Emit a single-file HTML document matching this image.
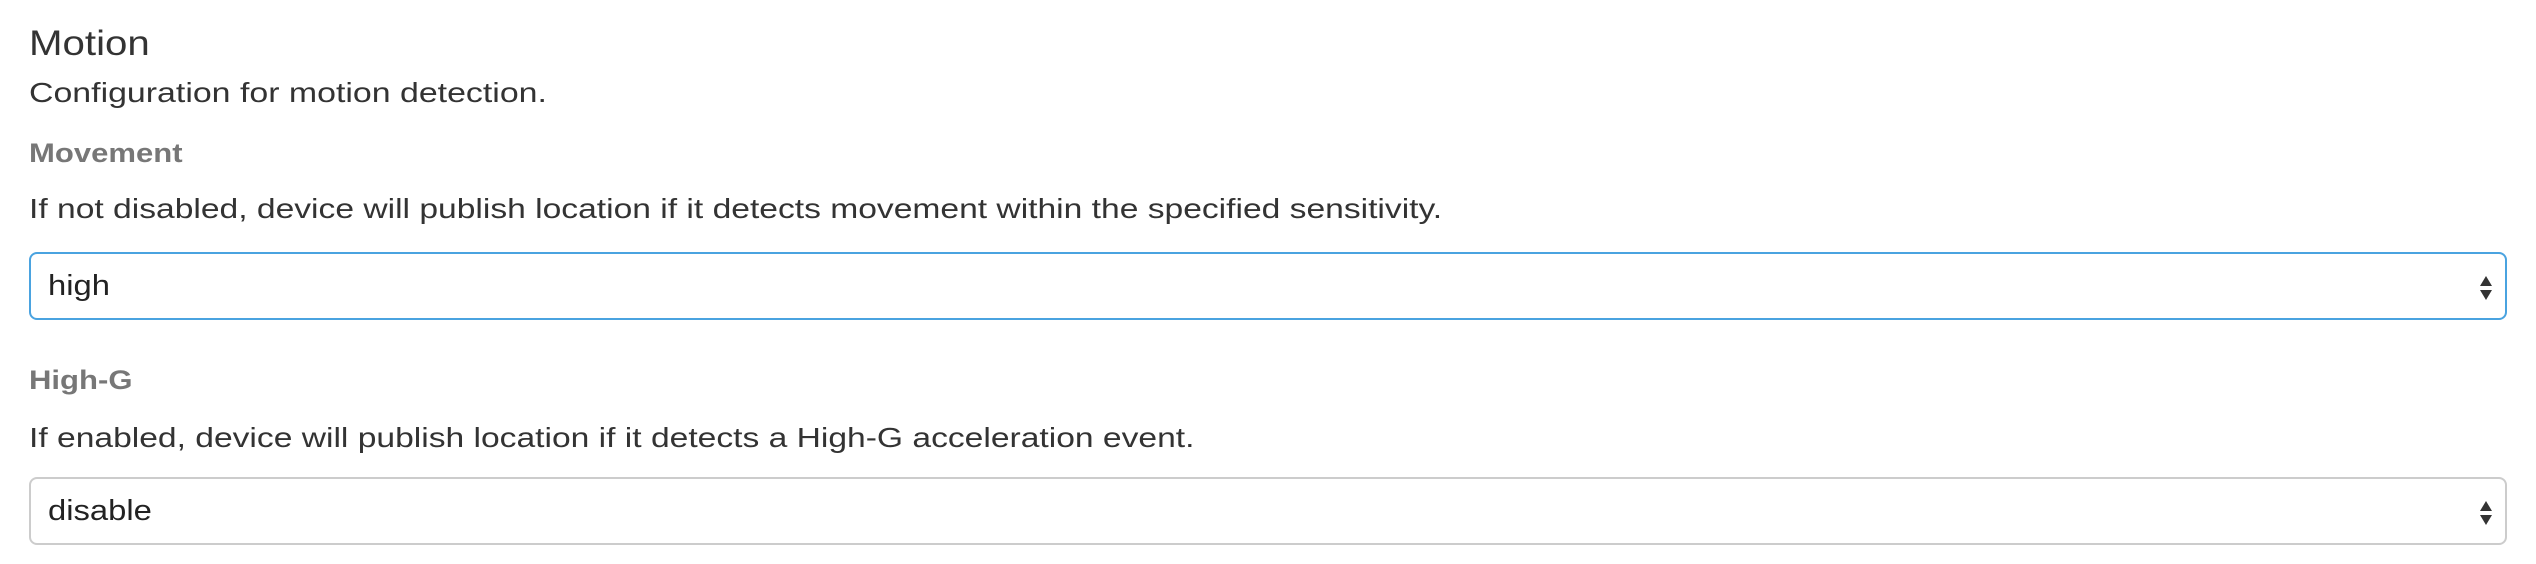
<!DOCTYPE html>
<html><head><style>
body{margin:0;width:2536px;height:564px;background:#fff;font-family:"Liberation Sans",sans-serif;color:#333;position:relative;overflow:hidden}
.t{position:absolute;left:29px;white-space:nowrap;line-height:1;transform-origin:0 0}
.sel{position:absolute;left:29px;width:2474px;height:64px;border:2px solid #ccc;border-radius:8px;box-sizing:content-box}
.sel span{position:absolute;left:17px;font-size:29px;color:#222;top:16px;transform:scaleX(1.13);transform-origin:0 0}
</style></head><body>
<div class="t" style="top:26px;font-size:35px;color:#333;transform:scaleX(1.15)">Motion</div>
<div class="t" style="top:79px;font-size:28px;transform:scaleX(1.21)">Configuration for motion detection.</div>
<div class="t" style="top:140px;font-size:27px;font-weight:bold;color:#777;transform:scaleX(1.15)">Movement</div>
<div class="t" style="top:195px;font-size:28px;transform:scaleX(1.2)">If not disabled, device will publish location if it detects movement within the specified sensitivity.</div>
<div class="sel" style="top:252px;border-color:#4aa3e0"><span>high</span>
<svg style="position:absolute;right:12px;top:20px" width="14" height="28"><polygon points="7,2 13,12 1,12" fill="#333"/><polygon points="1,16 13,16 7,26" fill="#333"/></svg></div>
<div class="t" style="top:367px;font-size:27px;font-weight:bold;color:#777;transform:scaleX(1.15)">High-G</div>
<div class="t" style="top:424px;font-size:28px;transform:scaleX(1.2)">If enabled, device will publish location if it detects a High-G acceleration event.</div>
<div class="sel" style="top:477px"><span>disable</span>
<svg style="position:absolute;right:12px;top:20px" width="14" height="28"><polygon points="7,2 13,12 1,12" fill="#333"/><polygon points="1,16 13,16 7,26" fill="#333"/></svg></div>
</body></html>
